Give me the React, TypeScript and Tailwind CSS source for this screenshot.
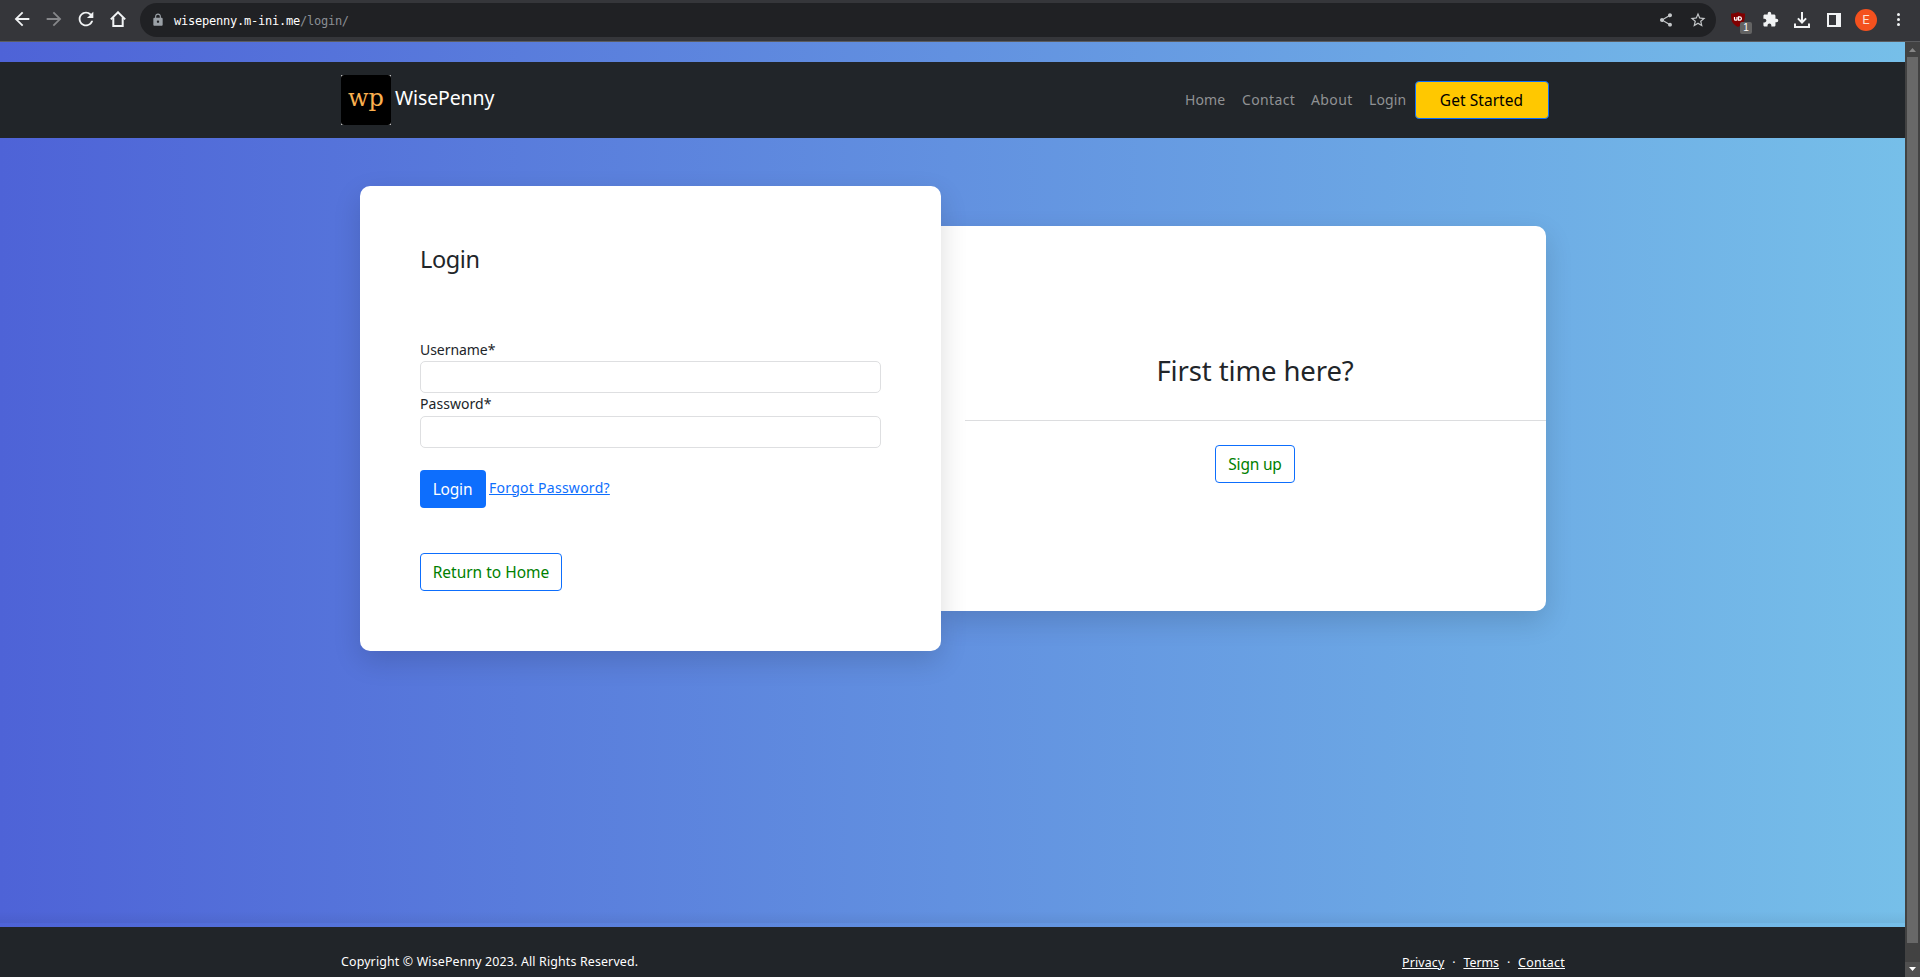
import type { ReactNode } from "react";
import { MdArrowBack, MdArrowForward, MdExtension, MdLock, MdRefresh, MdShare, MdStarBorder } from "react-icons/md";

function HomeIcon() {
  return (
    <svg width="16" height="16" viewBox="0 0 16 16" fill="none" stroke="#f1f3f4" strokeWidth="2">
      <path d="M0.8 8.4 8 1.3l7.2 7.1" />
      <path d="M3.3 6.6v8.4h9.4V6.6" />
    </svg>
  );
}

function DownloadIcon() {
  return (
    <svg width="16" height="16" viewBox="0 0 16 16" fill="none" stroke="#f1f3f4" strokeWidth="2">
      <path d="M8 0v10M3.9 6.4 8 10.5l4.1-4.1M1 11.5V15h14v-3.5" />
    </svg>
  );
}

function PanelIcon() {
  return (
    <svg width="14" height="14" viewBox="0 0 14 14" fill="#f1f3f4">
      <path fillRule="evenodd" d="M0 0h14v14H0zM2 2v10h7V2z" />
    </svg>
  );
}

function ShieldIcon() {
  return (
    <div className="relative h-[15px] w-[14px]">
      <svg width="14" height="15" viewBox="0 0 14 15">
        <path d="M7 0c2.2 1.2 4.400 1.500 7 1.500 0 6.500-.5 10-7 13.500C.5 11.500 0 8 0 1.500 2.600 1.500 4.800 1.200 7 0z" fill="#800000" />
        <path d="M3.500 4.900v2.300q0 1 1 1h.5q1 0 1-1V4.900M7.500 8.200V4.900h1q1.900 0 1.900 1.650T8.500 8.200z" fill="none" stroke="#fff" strokeWidth="1.200" />
      </svg>
      <span className="absolute left-[9px] top-[10px] flex h-3 w-3 items-center justify-center rounded-[2px] bg-[#636363] font-['Liberation_Sans',sans-serif] text-[10px] leading-none text-white">
        1
      </span>
    </div>
  );
}

function BrowserBar() {
  return (
    <header className="flex h-[42px] shrink-0 items-start border-b border-[#5b5c5f] bg-[#35363a] text-[#f1f3f4]">
      <div className="flex h-[38px] w-[140px] items-center pl-[11px]">
        <MdArrowBack size={22} />
        <MdArrowForward size={22} className="ml-[10px] text-[#86878a]" />
        <MdRefresh size={22} className="ml-[10px]" />
        <span className="ml-[13px]"><HomeIcon /></span>
      </div>
      <div className="mt-[3px] flex h-[34px] w-[1576px] items-center rounded-full bg-[#202124] pl-[11px]">
        <MdLock size={14} className="text-[#9aa0a6]" />
        <p className="ml-[9px] mt-px grow font-['DejaVu_Sans_Mono',monospace] text-[12px] leading-4 tracking-[-0.23px] text-white">
          wisepenny.m-ini.me<span className="text-[#8b8f94]">/login/</span>
        </p>
        <MdShare size={16} className="mr-[15px] text-[#c4c7c9]" />
        <MdStarBorder size={18} className="mr-[9px] text-[#c4c7c9]" />
      </div>
      <div className="flex h-[39px] items-center pl-[15px]">
        <ShieldIcon />
        <MdExtension size={17} className="ml-[17px]" />
        <span className="ml-[15px]"><DownloadIcon /></span>
        <span className="ml-[17px]"><PanelIcon /></span>
        <span className="ml-[14px] mt-px flex h-[22px] w-[22px] items-center justify-center rounded-full bg-[#f4511e] font-['Roboto',sans-serif] text-[13px] text-[#fbe0d8]">
          E
        </span>
        <span className="ml-5 flex flex-col gap-[2px]">
          <i className="h-[3px] w-[3px] rounded-full bg-[#f1f3f4]" />
          <i className="h-[3px] w-[3px] rounded-full bg-[#f1f3f4]" />
          <i className="h-[3px] w-[3px] rounded-full bg-[#f1f3f4]" />
        </span>
      </div>
    </header>
  );
}

function Navbar() {
  return (
    <nav className="flex h-[76px] shrink-0 items-center bg-[#212529] pl-[341px]">
      <a className="flex w-[843px] items-center">
        <span className="h-[50px] w-[50px] bg-[#cfcfcf]">
          <span className="flex h-full w-full justify-center rounded-[3px] bg-black font-['DejaVu_Serif',serif] text-[24px] leading-[46px] text-[#fbb04f]">
            wp
          </span>
        </span>
        <span className="-mt-[5px] ml-[4px] text-[19.5px] leading-7 tracking-[-0.12px] text-white">WisePenny</span>
      </a>
      <div className="flex items-center text-[14px] leading-[22px] text-[#909294]">
        <a className="w-[57px] pl-px tracking-[0.1px]">Home</a>
        <a className="w-[70px] pl-px tracking-[0.35px]">Contact</a>
        <a className="w-[57px] tracking-[0.4px]">About</a>
        <a className="w-[47px] pl-px tracking-[0.1px]">Login</a>
      </div>
      <button className="h-[38px] w-[134px] rounded-[4px] border border-[#0d6efd] bg-[#ffc800] pr-px text-[15.5px] leading-6 tracking-[0.05px] text-black">
        Get Started
      </button>
    </nav>
  );
}

function OutlineButton({ className, children }: { className: string; children: ReactNode }) {
  return (
    <button className={`h-[38px] rounded-[4px] border border-[#0d6efd] text-[15.5px] leading-6 text-[#008000] ${className}`}>
      {children}
    </button>
  );
}

function LoginCard() {
  return (
    <section className="z-10 h-[465px] w-[581px] rounded-[10px] bg-white px-[60px] pt-[59px] text-[14px] text-[#212529] shadow-[0_10px_28px_rgba(0,0,0,0.14)]">
      <h3 className="text-[23.5px] leading-[29px] tracking-[-0.4px]">Login</h3>
      <label className="mt-[65px] block leading-[22px] tracking-[-0.05px]">Username*</label>
      <input className="block h-8 w-full rounded-[5px] border border-[#dedfe1] px-2" />
      <label className="block pb-px leading-[22px] tracking-[0.05px]">Password*</label>
      <input className="block h-8 w-full rounded-[5px] border border-[#dedfe1] px-2" />
      <div className="mt-[22px] flex items-center">
        <button className="h-[38px] w-[66px] rounded-[4px] bg-[#0d6efd] pr-px text-[15.5px] leading-6 tracking-[-0.2px] text-white">Login</button>
        <a className="-mt-[3px] ml-[3px] leading-[22px] tracking-[0.27px] text-[#0d6efd] underline">Forgot Password?</a>
      </div>
      <OutlineButton className="mt-[45px] w-[142px]">Return to Home</OutlineButton>
    </section>
  );
}

function SignUpCard() {
  return (
    <section className="mt-10 h-[385px] w-[605px] rounded-r-[10px] bg-white pl-6 pt-[128px] text-center text-[#212529] shadow-[0_10px_28px_rgba(0,0,0,0.14)]">
      <h2 className="pr-px text-[27.5px] leading-[34px] tracking-[-0.12px]">First time here?</h2>
      <hr className="mt-8 border-[#dcdddf]" />
      <OutlineButton className="mr-px mt-6 w-20 tracking-[-0.2px]">Sign up</OutlineButton>
    </section>
  );
}

function Footer() {
  return (
    <footer className="flex h-[50px] shrink-0 items-start justify-between bg-[#212529] px-[340px] pt-[25px] text-[12.4px] leading-5 text-white">
      <p className="pl-px tracking-[0.15px]">Copyright © WisePenny 2023. All Rights Reserved.</p>
      <div className="mt-px flex">
        <a className="tracking-[0.15px] underline">Privacy</a>
        <span className="w-[19px] text-center">·</span>
        <a className="underline">Terms</a>
        <span className="w-[19px] text-center">·</span>
        <a className="tracking-[0.3px] underline">Contact</a>
      </div>
    </footer>
  );
}

function Scrollbar() {
  return (
    <aside className="flex w-[15px] shrink-0 flex-col items-center bg-[#424242]">
      <svg width="15" height="15" viewBox="0 0 15 15" className="shrink-0">
        <path d="M4 10h7L7.500 6z" fill="#868686" />
      </svg>
      <div className="h-[886px] w-[11px] shrink-0 bg-[#686868]" />
      <div className="grow" />
      <svg width="15" height="15" viewBox="0 0 15 15" className="shrink-0 bg-[#505050]">
        <path d="M4 5h7L7.500 9z" fill="#fff" />
      </svg>
    </aside>
  );
}

export default function App() {
  return (
    <div className="flex h-[977px] w-[1920px] flex-col overflow-hidden font-['Noto_Sans',sans-serif]">
      <BrowserBar />
      <div className="flex min-h-0 grow">
        <div className="flex w-[1905px] flex-col bg-linear-[to_right,#4e63d7,#76bfe9] pt-5">
          <Navbar />
          <main className="flex grow items-start pl-[360px] pt-12">
            <LoginCard />
            <SignUpCard />
          </main>
          <div className="h-3 shrink-0 bg-linear-to-b from-black/0 to-black/5" />
          <div className="h-1 shrink-0" />
          <Footer />
        </div>
        <Scrollbar />
      </div>
    </div>
  );
}
